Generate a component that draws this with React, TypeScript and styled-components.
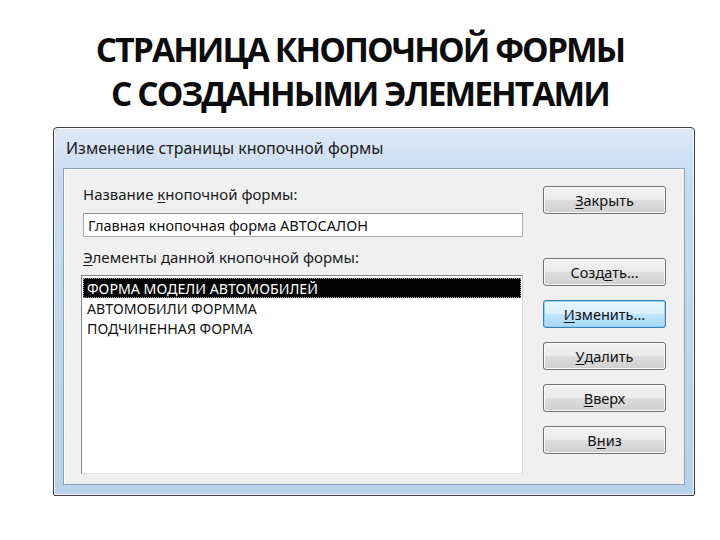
import React from "react";
import styled, { createGlobalStyle } from "styled-components";

const GlobalStyle = createGlobalStyle`
  html, body {
    margin: 0;
    padding: 0;
    background: #ffffff;
  }
`;

const Page = styled.div`
  width: 720px;
  height: 540px;
  display: flex;
  flex-direction: column;
  overflow: hidden;
`;

const Heading = styled.h1`
  margin: 0;
  padding-top: 27px;
  font-family: "Open Sans", "Liberation Sans", sans-serif;
  font-weight: 700;
  font-size: 33.5px;
  line-height: 44px;
  letter-spacing: -1.9px;
  text-align: center;
  color: #0c0c0c;
`;

const Window = styled.div`
  margin: 12px 0 0 53px;
  width: 642px;
  height: 369px;
  box-sizing: border-box;
  border: 1px solid #3b3f45;
  border-radius: 4px 4px 2px 2px;
  background: linear-gradient(180deg, #dde9f6 0%, #c8dbef 14%, #b9d1ea 100%);
  box-shadow: inset 0 0 0 1px rgba(255, 255, 255, 0.7);
  display: flex;
  flex-direction: column;
  padding: 0 9px 10px 9px;
`;

const TitleBar = styled.div`
  height: 40px;
  display: flex;
  align-items: center;
  padding-left: 3px;
  font-family: "Noto Sans", "DejaVu Sans", sans-serif;
  font-size: 16px;
  color: #1b1b1b;
`;

const Client = styled.div`
  flex: 1;
  background: #f0f0f0;
  border: 1px solid #8aa2bb;
  box-shadow: inset 1px 1px 0 #ffffff;
  display: grid;
  grid-template-columns: 442px 123px;
  column-gap: 20px;
  padding: 16px 0 8px 17px;
`;

const LeftColumn = styled.div`
  display: flex;
  flex-direction: column;
`;

const Label = styled.div<{ $top?: number }>`
  font-family: "Noto Sans", "DejaVu Sans", sans-serif;
  font-size: 15px;
  line-height: 18px;
  color: #1a1a1a;
  padding-left: 2px;
  margin-top: ${(p) => p.$top ?? 0}px;
`;

const TextBox = styled.div`
  margin-top: 10px;
  height: 24px;
  margin-left: 2px;
  box-sizing: border-box;
  border: 1px solid #abadb3;
  border-top-color: #8e9096;
  background: #ffffff;
  display: flex;
  align-items: center;
  padding-left: 4px;
  font-family: "Noto Sans", "DejaVu Sans", sans-serif;
  font-size: 14.5px;
  color: #111;
`;

const ListBox = styled.div`
  margin-top: 9px;
  height: 199px;
  box-sizing: border-box;
  border: 1px solid #828790;
  border-right-color: #d5d5d5;
  border-bottom-color: #e3e3e3;
  background: #ffffff;
  padding: 2px 1px;
  display: flex;
  flex-direction: column;
`;

const ListItem = styled.div<{ $selected?: boolean }>`
  height: 20px;
  display: flex;
  align-items: center;
  padding-left: 4px;
  font-family: "Noto Sans", "DejaVu Sans", sans-serif;
  font-size: 14.2px;
  color: ${(p) => (p.$selected ? "#ffffff" : "#111")};
  background: ${(p) => (p.$selected ? "#050505" : "transparent")};
  outline: ${(p) => (p.$selected ? "1px dotted #9a9a9a" : "none")};
  outline-offset: -1px;
`;

const ButtonColumn = styled.div`
  display: flex;
  flex-direction: column;
  padding-top: 1px;
`;

const Button = styled.div<{ $gap: number; $focused?: boolean }>`
  margin-top: ${(p) => p.$gap}px;
  height: 28px;
  box-sizing: border-box;
  border: 1px solid ${(p) => (p.$focused ? "#3c7fb1" : "#707070")};
  border-radius: 3px;
  background: ${(p) =>
    p.$focused
      ? "linear-gradient(180deg, #eaf6fd 0%, #d9f0fc 48%, #bee6fd 52%, #a7d9f5 100%)"
      : "linear-gradient(180deg, #f2f2f2 0%, #ebebeb 48%, #dddddd 52%, #cfcfcf 100%)"};
  box-shadow: inset 0 0 0 1px ${(p) => (p.$focused ? "#8fd0f5" : "#fbfbfb")};
  display: flex;
  align-items: center;
  justify-content: center;
  font-family: "Noto Sans", "DejaVu Sans", sans-serif;
  font-size: 14.5px;
  color: #111;
`;

const Key = styled.span`
  text-decoration: underline;
  text-underline-offset: 2px;
`;

const items = [
  "ФОРМА МОДЕЛИ АВТОМОБИЛЕЙ",
  "АВТОМОБИЛИ ФОРММА",
  "ПОДЧИНЕННАЯ ФОРМА",
];

export default function App() {
  return (
    <Page>
      <GlobalStyle />
      <Heading>
        СТРАНИЦА КНОПОЧНОЙ ФОРМЫ
        <br />С СОЗДАННЫМИ ЭЛЕМЕНТАМИ
      </Heading>
      <Window>
        <TitleBar>Изменение страницы кнопочной формы</TitleBar>
        <Client>
          <LeftColumn>
            <Label>
              Название <Key>к</Key>нопочной формы:
            </Label>
            <TextBox>Главная кнопочная форма АВТОСАЛОН</TextBox>
            <Label $top={11}>
              <Key>Э</Key>лементы данной кнопочной формы:
            </Label>
            <ListBox>
              {items.map((item, i) => (
                <ListItem key={item} $selected={i === 0}>
                  {item}
                </ListItem>
              ))}
            </ListBox>
          </LeftColumn>
          <ButtonColumn>
            <Button $gap={0}>
              <Key>З</Key>акрыть
            </Button>
            <Button $gap={44}>
              Созд<Key>а</Key>ть...
            </Button>
            <Button $gap={14} $focused>
              <Key>И</Key>зменить...
            </Button>
            <Button $gap={14}>
              <Key>У</Key>далить
            </Button>
            <Button $gap={14}>
              <Key>В</Key>верх
            </Button>
            <Button $gap={14}>
              В<Key>н</Key>из
            </Button>
          </ButtonColumn>
        </Client>
      </Window>
    </Page>
  );
}
